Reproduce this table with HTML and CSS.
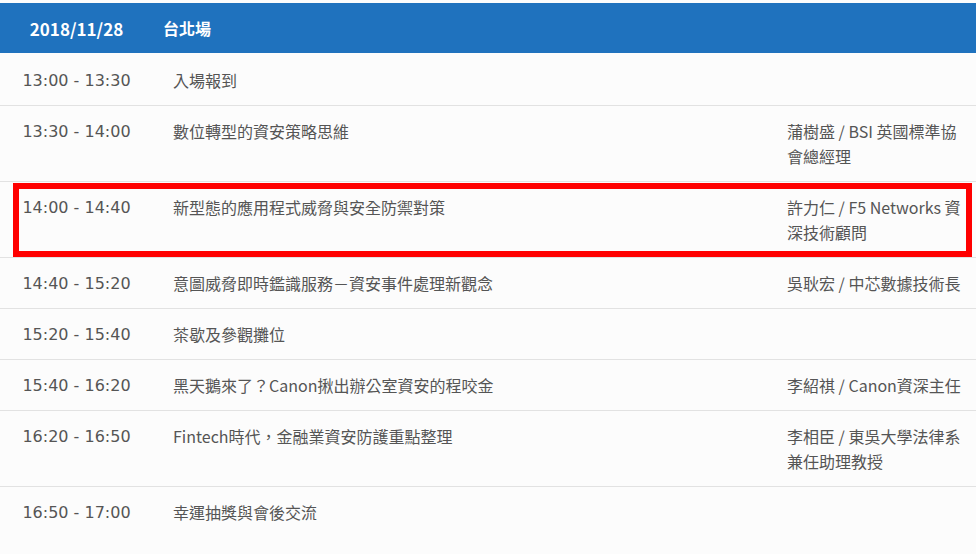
FILE: index.html
```html
<!DOCTYPE html>
<html lang="zh-Hant">
<head>
<meta charset="utf-8">
<title>議程</title>
<link rel="stylesheet" href="styles.css">
</head>
<body>
<div class="agenda">
  <div class="agenda-head">
    <div class="col-time">2018/11/28</div>
    <div class="col-venue">台北場</div>
  </div>
  <div class="row">
    <div class="col-time">13:00 - 13:30</div>
    <div class="col-title">入場報到</div>
    <div class="col-speaker"></div>
  </div>
  <div class="row">
    <div class="col-time">13:30 - 14:00</div>
    <div class="col-title">數位轉型的資安策略思維</div>
    <div class="col-speaker">蒲樹盛 / BSI 英國標準協會總經理</div>
  </div>
  <div class="row row-highlight">
    <div class="col-time">14:00 - 14:40</div>
    <div class="col-title">新型態的應用程式威脅與安全防禦對策</div>
    <div class="col-speaker">許力仁 / F5 Networks 資深技術顧問</div>
  </div>
  <div class="row">
    <div class="col-time">14:40 - 15:20</div>
    <div class="col-title">意圖威脅即時鑑識服務－資安事件處理新觀念</div>
    <div class="col-speaker">吳耿宏 / 中芯數據技術長</div>
  </div>
  <div class="row">
    <div class="col-time">15:20 - 15:40</div>
    <div class="col-title">茶歇及參觀攤位</div>
    <div class="col-speaker"></div>
  </div>
  <div class="row">
    <div class="col-time">15:40 - 16:20</div>
    <div class="col-title">黑天鵝來了？Canon揪出辦公室資安的程咬金</div>
    <div class="col-speaker">李紹祺 / Canon資深主任</div>
  </div>
  <div class="row">
    <div class="col-time">16:20 - 16:50</div>
    <div class="col-title">Fintech時代，金融業資安防護重點整理</div>
    <div class="col-speaker">李相臣 / 東吳大學法律系兼任助理教授</div>
  </div>
  <div class="row row-last">
    <div class="col-time">16:50 - 17:00</div>
    <div class="col-title">幸運抽獎與會後交流</div>
    <div class="col-speaker"></div>
  </div>
</div>
</body>
</html>
```
FILE: styles.css
```css
html, body {
  margin: 0;
  padding: 0;
  background: #fcfcfc;
}
body {
  padding-top: 3px;
  font-family: "Noto Sans CJK TC", "Noto Sans", sans-serif;
  font-size: 16px;
  color: #555;
}
.agenda {
  width: 976px;
}
.agenda-head {
  display: grid;
  grid-template-columns: 153px 1fr;
  height: 50px;
  margin-bottom: 2px;
  align-items: center;
  background: #1f72be;
  color: #fff;
  font-weight: bold;
  font-size: 16px;
}
.agenda-head .col-time {
  text-align: center;
  font-size: 17px;
}
.agenda-head .col-venue {
  padding-left: 10px;
}
.row {
  display: grid;
  grid-template-columns: 153px 1fr 180px;
  padding: 13px 9px 12px 0;
  line-height: 25px;
  border-bottom: 1px solid #e2e2e2;
  position: relative;
}
.row-last {
  border-bottom: none;
}
.row .col-time {
  text-align: center;
  font-family: "DejaVu Sans", sans-serif;
  font-size: 16px;
}
.row .col-title {
  padding-left: 20px;
}
.row-highlight::after {
  content: "";
  position: absolute;
  left: 13px;
  top: 1px;
  right: 4px;
  bottom: 0;
  border: 6px solid #f00;
  pointer-events: none;
}
```
